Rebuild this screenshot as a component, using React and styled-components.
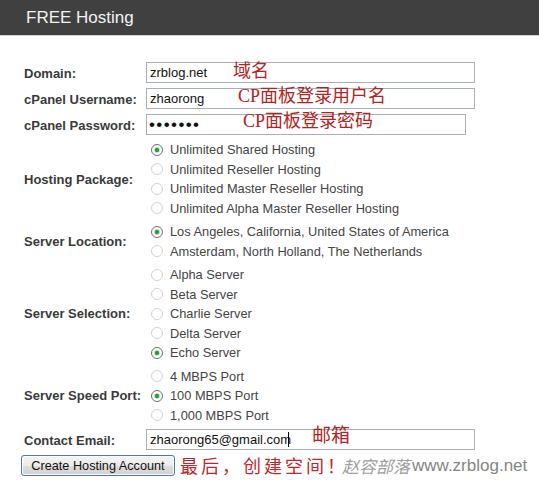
import React from "react";
import styled, { createGlobalStyle } from "styled-components";

const GlobalStyle = createGlobalStyle`
  body {
    margin: 0;
    background: #fff;
    font-family: "Liberation Sans", Arial, sans-serif;
  }
`;

const Header = styled.div`
  height: 35px;
  padding-left: 26px;
  background: #404040;
  border-bottom: 1px solid #d6d6d6;
  color: #f2f2f2;
  font-size: 17px;
  line-height: 35px;
`;

const Form = styled.form`
  display: grid;
  grid-template-columns: 122px 1fr;
  row-gap: 4px;
  padding: 26px 0 0 24px;
`;

const Label = styled.label`
  align-self: center;
  font-size: 13px;
  font-weight: bold;
  color: #3a3a3a;
  white-space: nowrap;
`;

const Field = styled.div`
  position: relative;
  height: 22px;
`;

const TextInput = styled.input`
  display: block;
  box-sizing: border-box;
  width: ${(p) => p.$w || 329}px;
  height: 21px;
  margin: 0;
  padding: 0 3px;
  border: 1px solid #a9afb7;
  font: 13px "Liberation Sans", Arial, sans-serif;
  color: #111;
  outline: none;

  &[type="password"] {
    font-size: 17px;
    letter-spacing: 1.4px;
    padding-left: 2px;
  }
`;

const Caret = styled.span`
  position: absolute;
  left: ${(p) => p.$x}px;
  top: 3px;
  width: 1px;
  height: 15px;
  background: #000;
`;

const Note = styled.span`
  position: absolute;
  left: ${(p) => p.$x}px;
  top: ${(p) => p.$y}px;
  font-family: "Liberation Serif", "Noto Sans CJK SC", serif;
  font-size: ${(p) => p.$size || 18}px;
  line-height: 1;
  color: #b42323;
  white-space: nowrap;
  pointer-events: none;
`;

const Options = styled.div`
  display: flex;
  flex-direction: column;
`;

const Option = styled.div`
  height: 19.5px;
  display: flex;
  align-items: center;
  gap: 7px;
  padding-left: 5px;
  font-size: 12.8px;
  color: #444;
  white-space: nowrap;
`;

const Dot = styled.span`
  box-sizing: border-box;
  flex: none;
  width: 12px;
  height: 12px;
  border-radius: 50%;
  border: 1px solid ${(p) => (p.$on ? "#6f6f6f" : "#d2d2d2")};
  background: ${(p) =>
    p.$on
      ? "radial-gradient(circle, #23a03e 0, #23a03e 1.8px, #cfe8d2 2.6px, #fff 3.6px)"
      : "#fff"};
`;

const Actions = styled.div`
  grid-column: 1 / -1;
  display: flex;
  align-items: center;
  height: 21px;
  margin-left: -3px;
`;

const Button = styled.button`
  flex: none;
  width: 154px;
  height: 21px;
  padding: 0;
  border: 1px solid #56789a;
  border-radius: 3px;
  background: linear-gradient(#f4f4f4, #ececec 50%, #dedede 51%, #d2d2d2);
  box-shadow: inset 0 0 0 1px #fbfbfb;
  font: 12.7px "Liberation Sans", Arial, sans-serif;
  color: #111;
`;

const Final = styled.span`
  margin-left: 5px;
  font-family: "Noto Sans CJK SC", sans-serif;
  font-size: 18px;
  line-height: 21px;
  letter-spacing: 3px;
  color: #c0262b;
  white-space: nowrap;
`;

const Mark = styled.span`
  font-family: ${(p) =>
    p.$cjk ? '"Noto Sans CJK SC", serif' : '"Liberation Sans", Arial, sans-serif'};
  font-size: 17px;
  line-height: 21px;
  font-style: ${(p) => (p.$cjk ? "italic" : "normal")};
  color: ${(p) => (p.$cjk ? "#a0a0a0" : "#858585")};
  white-space: nowrap;
  margin-left: ${(p) => (p.$cjk ? -6 : 2)}px;
`;

const groups = [
  {
    label: "Hosting Package:",
    items: [
      "Unlimited Shared Hosting",
      "Unlimited Reseller Hosting",
      "Unlimited Master Reseller Hosting",
      "Unlimited Alpha Master Reseller Hosting",
    ],
    picked: 0,
  },
  {
    label: "Server Location:",
    items: [
      "Los Angeles, California, United States of America",
      "Amsterdam, North Holland, The Netherlands",
    ],
    picked: 0,
  },
  {
    label: "Server Selection:",
    items: ["Alpha Server", "Beta Server", "Charlie Server", "Delta Server", "Echo Server"],
    picked: 4,
  },
  {
    label: "Server Speed Port:",
    items: ["4 MBPS Port", "100 MBPS Port", "1,000 MBPS Port"],
    picked: 1,
  },
];

const App = () => {
  return (
    <>
      <GlobalStyle />
      <Header>FREE Hosting</Header>
      <Form onSubmit={(e) => e.preventDefault()}>
        <Label>Domain:</Label>
        <Field>
          <TextInput type="text" defaultValue="zrblog.net" readOnly />
          <Note $x={87} $y={0}>域名</Note>
        </Field>

        <Label>cPanel Username:</Label>
        <Field>
          <TextInput type="text" defaultValue="zhaorong" readOnly />
          <Note $x={92} $y={-1}>CP面板登录用户名</Note>
        </Field>

        <Label>cPanel Password:</Label>
        <Field>
          <TextInput $w={320} type="password" defaultValue="1234567" readOnly />
          <Note $x={97} $y={-2}>CP面板登录密码</Note>
        </Field>

        {groups.map((g) => (
          <React.Fragment key={g.label}>
            <Label>{g.label}</Label>
            <Options>
              {g.items.map((item, i) => (
                <Option key={item}>
                  <Dot $on={i === g.picked} />
                  {item}
                </Option>
              ))}
            </Options>
          </React.Fragment>
        ))}

        <Label>Contact Email:</Label>
        <Field>
          <TextInput type="text" defaultValue="zhaorong65@gmail.com" readOnly />
          <Caret $x={142} />
          <Note $x={166} $y={-3} $size={19}>邮箱</Note>
        </Field>

        <Actions>
          <Button type="submit">Create Hosting Account</Button>
          <Final>最后，创建空间！</Final>
          <Mark $cjk>赵容部落</Mark>
          <Mark>www.zrblog.net</Mark>
        </Actions>
      </Form>
    </>
  );
};

export default App;
